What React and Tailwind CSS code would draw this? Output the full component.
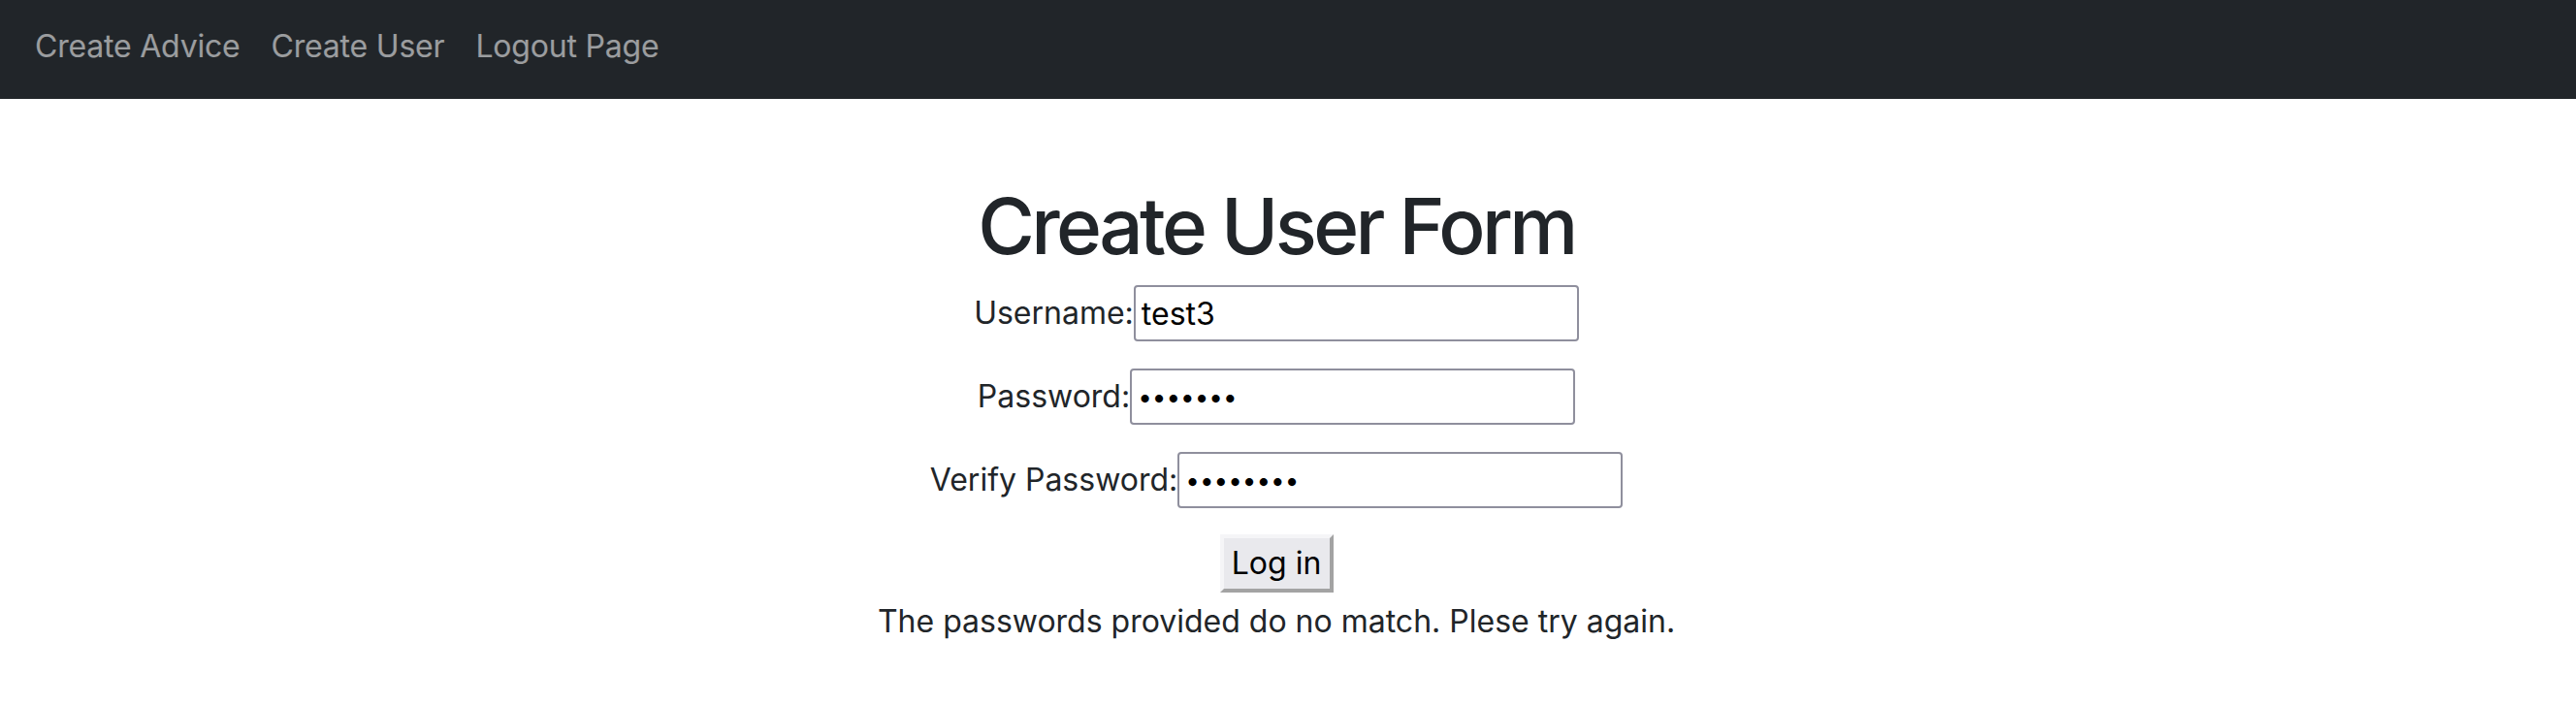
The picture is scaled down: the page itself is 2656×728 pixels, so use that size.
export default function App() {
  const links = ["Create Advice", "Create User", "Logout Page"];

  return (
    <div className="min-h-screen bg-white font-['Inter','Liberation_Sans',sans-serif] text-[#212529]">
      {/* NAVBAR */}
      <nav className="h-[102px] bg-[#212529] flex items-center px-[20px] pb-[6px]">
        {links.map((l) => (
          <a
            key={l}
            href="#"
            className="px-[16px] text-[32px] leading-[48px] tracking-[-0.2px] text-white/55 hover:text-white/75"
          >
            {l}
          </a>
        ))}
      </nav>

      {/* FORM */}
      <main className="flex flex-col items-center pr-[24px]">
        <h1 className="mt-[83px] mb-[13px] text-[80px] leading-[96px] font-medium tracking-[-3.6px]">
          Create User Form
        </h1>

        <form className="flex flex-col items-center gap-[28px]">
          <div className="flex items-center h-[58px]">
            <label className="text-[32px] leading-[48px]">Username:</label>
            <input
              type="text"
              defaultValue="test3"
              className="w-[459px] h-[58px] border-2 border-[#8f8f9d] rounded-[4px] px-[6px] text-[32px] text-black outline-none"
            />
          </div>
          <div className="flex items-center h-[58px]">
            <label className="text-[32px] leading-[48px]">Password:</label>
            <input
              type="password"
              defaultValue="1234567"
              className="w-[459px] h-[58px] border-2 border-[#8f8f9d] rounded-[4px] px-[6px] text-[26px] text-black outline-none"
            />
          </div>
          <div className="flex items-center h-[58px]">
            <label className="text-[32px] leading-[48px]">Verify Password:</label>
            <input
              type="password"
              defaultValue="12345678"
              className="w-[459px] h-[58px] border-2 border-[#8f8f9d] rounded-[4px] px-[6px] text-[26px] text-black outline-none"
            />
          </div>
        </form>

        <button
          type="button"
          className="mt-[27px] w-[117px] h-[60px] bg-[#e9e9ed] border-4 border-t-[#f5f5f7] border-l-[#f5f5f7] border-b-[#a3a3a3] border-r-[#a3a3a3] text-[32px] leading-[48px] text-black"
        >
          Log in
        </button>
        <p className="mt-[6px] text-[32px] leading-[48px]">
          The passwords provided do no match. Plese try again.
        </p>
      </main>
    </div>
  );
}
